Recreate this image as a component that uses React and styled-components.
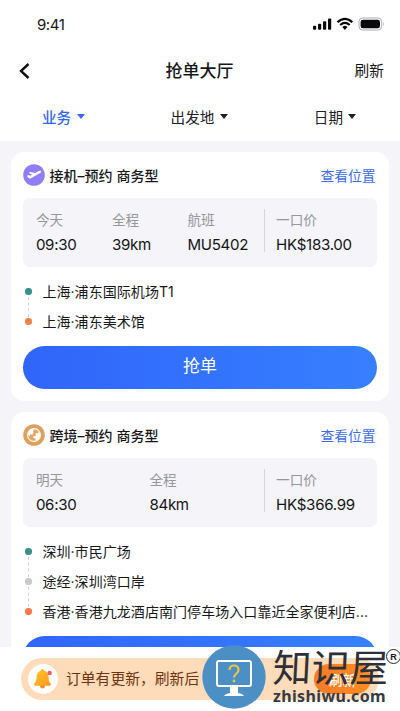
import React from 'react';
import styled, { createGlobalStyle } from 'styled-components';

const Global = createGlobalStyle`
  * { box-sizing: border-box; }
  body { margin: 0; background: #fff; overflow: hidden; }
  button { border: 0; padding: 0; background: none; font: inherit; color: inherit; }
`;
const Screen = styled.div`
  width: 400px; height: 711px; overflow: hidden; position: relative;
  display: flex; flex-direction: column; background: #fff; color: #17171a;
  font-family: Inter, "Noto Sans CJK SC", sans-serif; font-size: 14px;
  white-space: nowrap;
`;
const StatusBar = styled.header`
  height: 48px; flex: none; display: flex; align-items: center; justify-content: space-between;
  padding: 0 16px 0 37px; font-size: 15px; letter-spacing: -0.45px;
`;
const NavBar = styled.nav`
  height: 46px; flex: none; display: grid; grid-template-columns: 1fr auto 1fr;
  align-items: center; padding: 0 16px 0 18px;
`;
const Title = styled.h1`margin: 0 3px 0 0; font-size: 17px; font-weight: 500; line-height: 24px;`;
const Refresh = styled.button`justify-self: end; font-size: 14.7px; line-height: 20px;`;
const Back = styled.button`justify-self: start; display: flex;`;
const Tabs = styled.div`
  height: 47px; flex: none; display: flex; justify-content: space-between; align-items: center;
  padding: 0 43.5px 2px 42px;
`;
const Tab = styled.button`
  display: flex; align-items: center; gap: 5.5px; font-size: 14.6px;
  color: ${p => p.$active ? '#3566f0' : '#202024'}; font-weight: ${p => p.$active ? 500 : 400};
`;
const Caret = styled.i`
  border: 4.5px solid transparent; border-top: 5px solid currentColor; border-bottom: 0;
`;
const Feed = styled.main`
  height: 506px; flex: none; overflow: hidden; background: #f4f4f9;
  padding: 11px 11px 0; display: flex; flex-direction: column; gap: 11px;
`;
const Card = styled.article`
  flex: none; background: #fff; border-radius: 13px; padding: 0 12.4px 12.5px;
`;
const CardHead = styled.div`height: 46px; display: flex; align-items: center; gap: 4px;`;
const CardTitle = styled.h2`margin: 0; font-size: 14px; font-weight: 500; flex: 1; letter-spacing: 0.05px;`;
const MapLink = styled.button`color: #3e6ce8; font-size: 13.8px; padding-right: 1px;`;
const Info = styled.div`
  height: 69px; border-radius: 7px; background: #f4f4f9; display: flex;
  padding: 11px 12.5px 0 12.5px;
`;
const Fact = styled.div`
  width: ${p => p.$width}px; display: flex; flex-direction: column;
`;
const Price = styled(Fact)`
  margin-left: auto; width: 100px; height: 43px; border-left: 1px solid #d5d5dc; padding-left: 11px;
`;
const Label = styled.span`color: #96969b; font-size: 13.6px; line-height: 22px;`;
const Value = styled.span`
  font-size: 15.1px; line-height: 27px; color: #151518; font-weight: 430; letter-spacing: -0.3px;
`;
const Route = styled.ul`list-style: none; margin: 0; padding: 9.5px 0 9px;`;
const Stop = styled.li`
  position: relative; height: 30px; display: flex; align-items: center; padding-left: 2px; gap: 10.5px;
  font-size: 14px; letter-spacing: 0.06px;
  &:not(:last-child)::after {
    content: ''; position: absolute; left: 4.6px; top: 20px; height: 20px; border-left: 1px dashed #cdd3da;
  }
`;
const Dot = styled.i`width: 6.5px; height: 6.5px; border-radius: 50%; flex: none; background: ${p => p.$color};`;
const Place = styled.span`flex: 1; line-height: 30px; min-width: 0;`;
const Grab = styled.button`
  display: block; width: 100%; height: 43px; border-radius: 22px; color: #fff; font-size: 17px;
  line-height: 41px; padding-bottom: 2px;
  background: linear-gradient(90deg, #3065fa, #3680ff);
`;
const Footer = styled.footer`flex: 1; padding: 11px 21px; background: #fff;`;
const Notice = styled.div`
  height: 42px; border-radius: 21px; background: #ffdcb9; color: #713411;
  display: flex; align-items: center; padding: 0 8px 0 7px; font-size: 14.8px;
`;
const BellDisc = styled.span`
  width: 30px; height: 30px; border-radius: 50%; background: #fff; margin-right: 8px;
  display: grid; place-items: center; flex: none;
`;
const NoticeText = styled.span`flex: 1; min-width: 0; line-height: 22px; padding-bottom: 1px;`;
const Update = styled.button`
  width: 57px; height: 30px; border-radius: 15px; color: #fff; font-weight: 500; font-size: 13.5px;
  background: linear-gradient(90deg, #fa7927, #ff8d20); flex: none;
`;
const Watermark = styled.aside`
  position: absolute; left: 202px; top: 645px; width: 198px; height: 65px; display: flex; gap: 7px;
`;
const Brand = styled.div`display: flex; flex-direction: column; color: #343b44;`;
const BrandName = styled.strong`
  font: 400 38.5px/42px "Noto Sans CJK SC", sans-serif; color: #2d3137; display: block; height: 41px;
  transform: skewX(-3deg) translateY(-1px);
`;
const Domain = styled.span`font: 700 16px/20px "Noto Sans", sans-serif; letter-spacing: 0.35px;`;
const Registered = styled.span`
  position: absolute; right: -1px; top: 4px; width: 15px; height: 15px; border: 1.5px solid #24272b;
  border-radius: 50%; display: grid; place-items: center; font: 700 9px/10px "Liberation Sans", sans-serif;
`;

const StatusIcons = () => (
  <svg width="72" height="14" viewBox="0 0 72 14" fill="#09090b">
    <rect x="1" y="8.7" width="3.2" height="4" rx="1" />
    <rect x="6" y="6.7" width="3.2" height="6" rx="1" />
    <rect x="11" y="4.2" width="3.2" height="8.5" rx="1" />
    <rect x="16" y="1.6" width="3.2" height="11.1" rx="1" />
    <g fill="none" stroke="#09090b" strokeWidth="2.2">
      <path d="M25.5 5.3Q33 -1.5 40.3 5.3" /><path d="M28.2 8Q33 3.7 37.7 8" />
    </g>
    <path d="M30.3 9.9q2.6-2.2 5.2 0L32.9 13Z" />
    <rect x="47" y="1" width="22.7" height="12" rx="3.6" fill="none" stroke="#ababad" />
    <rect x="48.6" y="2.7" width="19.4" height="8.6" rx="2.2" />
    <path d="M71 5q1.2 2 0 4Z" fill="#999" />
  </svg>
);
const PlaneIcon = () => (
  <svg width="22" height="22" viewBox="0 0 22 22">
    <circle cx="11" cy="11" r="10.8" fill="#937df7" />
    <g transform="rotate(-7 11 11)">
      <path d="m3.8 11 1.3-.6 2 1 2.1-.9-3.2-2.3 1.6-.7 4.8 1.6 3.2-1.3c1.5-.6 2.8-.4 3 .3s-.8 1.4-2.2 2l-3.3 1.3-5.4 2.4c-1.3.5-2 .2-2.4-.4Z" fill="#fff" />
    </g>
  </svg>
);
const GlobeIcon = () => (
  <svg width="22" height="22" viewBox="0 0 22 22">
    <circle cx="11" cy="11" r="10.8" fill="#dca15f" />
    <circle cx="11" cy="11" r="6.4" fill="#e5a660" stroke="#fff" strokeWidth="1.1" />
    <path d="M5 10.5C4.8 7.4 7 5 10 4.8l1.2 1-1.4 1.3.9 1.2-1.6 2.4-1.8-.5-.8 2.1Zm5.4 1.8 2.3-.6.1-2.6 2.1.2.8-1.4 1.2 1.4c.9 3.5-1.4 6.8-4.5 7.4l.1-2-2.1-.8Z" fill="#fff" />
  </svg>
);
const Bell = () => (
  <svg width="22" height="24" viewBox="0 0 22 24">
    <defs><linearGradient id="bell" x2="1" y2="1"><stop stopColor="#ffc629" /><stop offset="1" stopColor="#ff9820" /></linearGradient></defs>
    <circle cx="10.5" cy="19.3" r="2.3" fill="#f38b18" />
    <circle cx="10.5" cy="3.6" r="1.6" fill="#ffb521" />
    <path d="M10.5 3.5c-4 0-6 3-6 6.5 0 4-1 5.4-2.2 6.6-.9 1 .1 2.2 1.2 2.2h14c1.2 0 2-1.2 1.2-2.2-1.3-1.2-2.2-2.6-2.2-6.6 0-3.5-2-6.5-6-6.5Z" fill="url(#bell)" />
    <circle cx="17.6" cy="6" r="2.2" fill="#ee5f61" />
  </svg>
);
const Monitor = () => (
  <svg width="64" height="64" viewBox="0 0 64 64">
    <circle cx="32" cy="32" r="31.7" fill="#4c8fc5" />
    <rect x="15" y="16" width="34" height="25" rx="2" fill="none" stroke="#fff" strokeWidth="2" />
    <path d="M28 42h8v6q5 1 6 3H22q1-2 6-3Z" fill="#fff" />
    <path d="M27.5 25c0-6 9-6 9 0 0 4-4.5 3.5-4.5 7.5" fill="none" stroke="#edc44b" strokeWidth="2.2" />
    <circle cx="32" cy="36" r="1.4" fill="#edc44b" />
  </svg>
);

const orders = [
  { title: '接机–预约 商务型', icon: <PlaneIcon />, price: 'HK$183.00',
    facts: [['今天', '09:30', 76], ['全程', '39km', 75.5], ['航班', 'MU5402', 75]],
    stops: [['上海·浦东国际机场T1', '#399089'], ['上海·浦东美术馆', '#ed8347']] },
  { title: '跨境–预约 商务型', icon: <GlobeIcon />, price: 'HK$366.99',
    facts: [['明天', '06:30', 113.5], ['全程', '84km', 113]],
    stops: [['深圳·市民广场', '#399089'], ['途经·深圳湾口岸', '#c8c8d0'], ['香港·香港九龙酒店南门停车场入口靠近全家便利店...', '#fa774d']] },
];

const Order = ({ order }) => (
  <Card>
    <CardHead>{order.icon}<CardTitle>{order.title}</CardTitle><MapLink>查看位置</MapLink></CardHead>
    <Info>
      {order.facts.map(([label, value, width]) => (
        <Fact key={label} $width={width}><Label>{label}</Label><Value>{value}</Value></Fact>
      ))}
      <Price><Label>一口价</Label><Value>{order.price}</Value></Price>
    </Info>
    <Route>{order.stops.map(([name, color]) => <Stop key={name}><Dot $color={color} /><Place>{name}</Place></Stop>)}</Route>
    <Grab>抢单</Grab>
  </Card>
);

export default function App() {
  return (
    <Screen>
      <Global />
      <StatusBar><span>9:41</span><StatusIcons /></StatusBar>
      <NavBar>
        <Back aria-label="返回"><svg width="12" height="18" viewBox="0 0 12 18" fill="none" stroke="#111" strokeWidth="2.4"><path d="M10.5 2 3 9l7.5 7" /></svg></Back>
        <Title>抢单大厅</Title><Refresh>刷新</Refresh>
      </NavBar>
      <Tabs>
        <Tab $active>业务<Caret /></Tab><Tab>出发地<Caret /></Tab><Tab>日期<Caret /></Tab>
      </Tabs>
      <Feed>{orders.map(order => <Order key={order.title} order={order} />)}</Feed>
      <Footer><Notice><BellDisc><Bell /></BellDisc><NoticeText>订单有更新，刷新后</NoticeText><Update>刷新</Update></Notice></Footer>
      <Watermark>
        <Monitor />
        <Brand><BrandName>知识屋</BrandName><Domain>zhishiwu.com</Domain></Brand>
        <Registered>R</Registered>
      </Watermark>
    </Screen>
  );
}
